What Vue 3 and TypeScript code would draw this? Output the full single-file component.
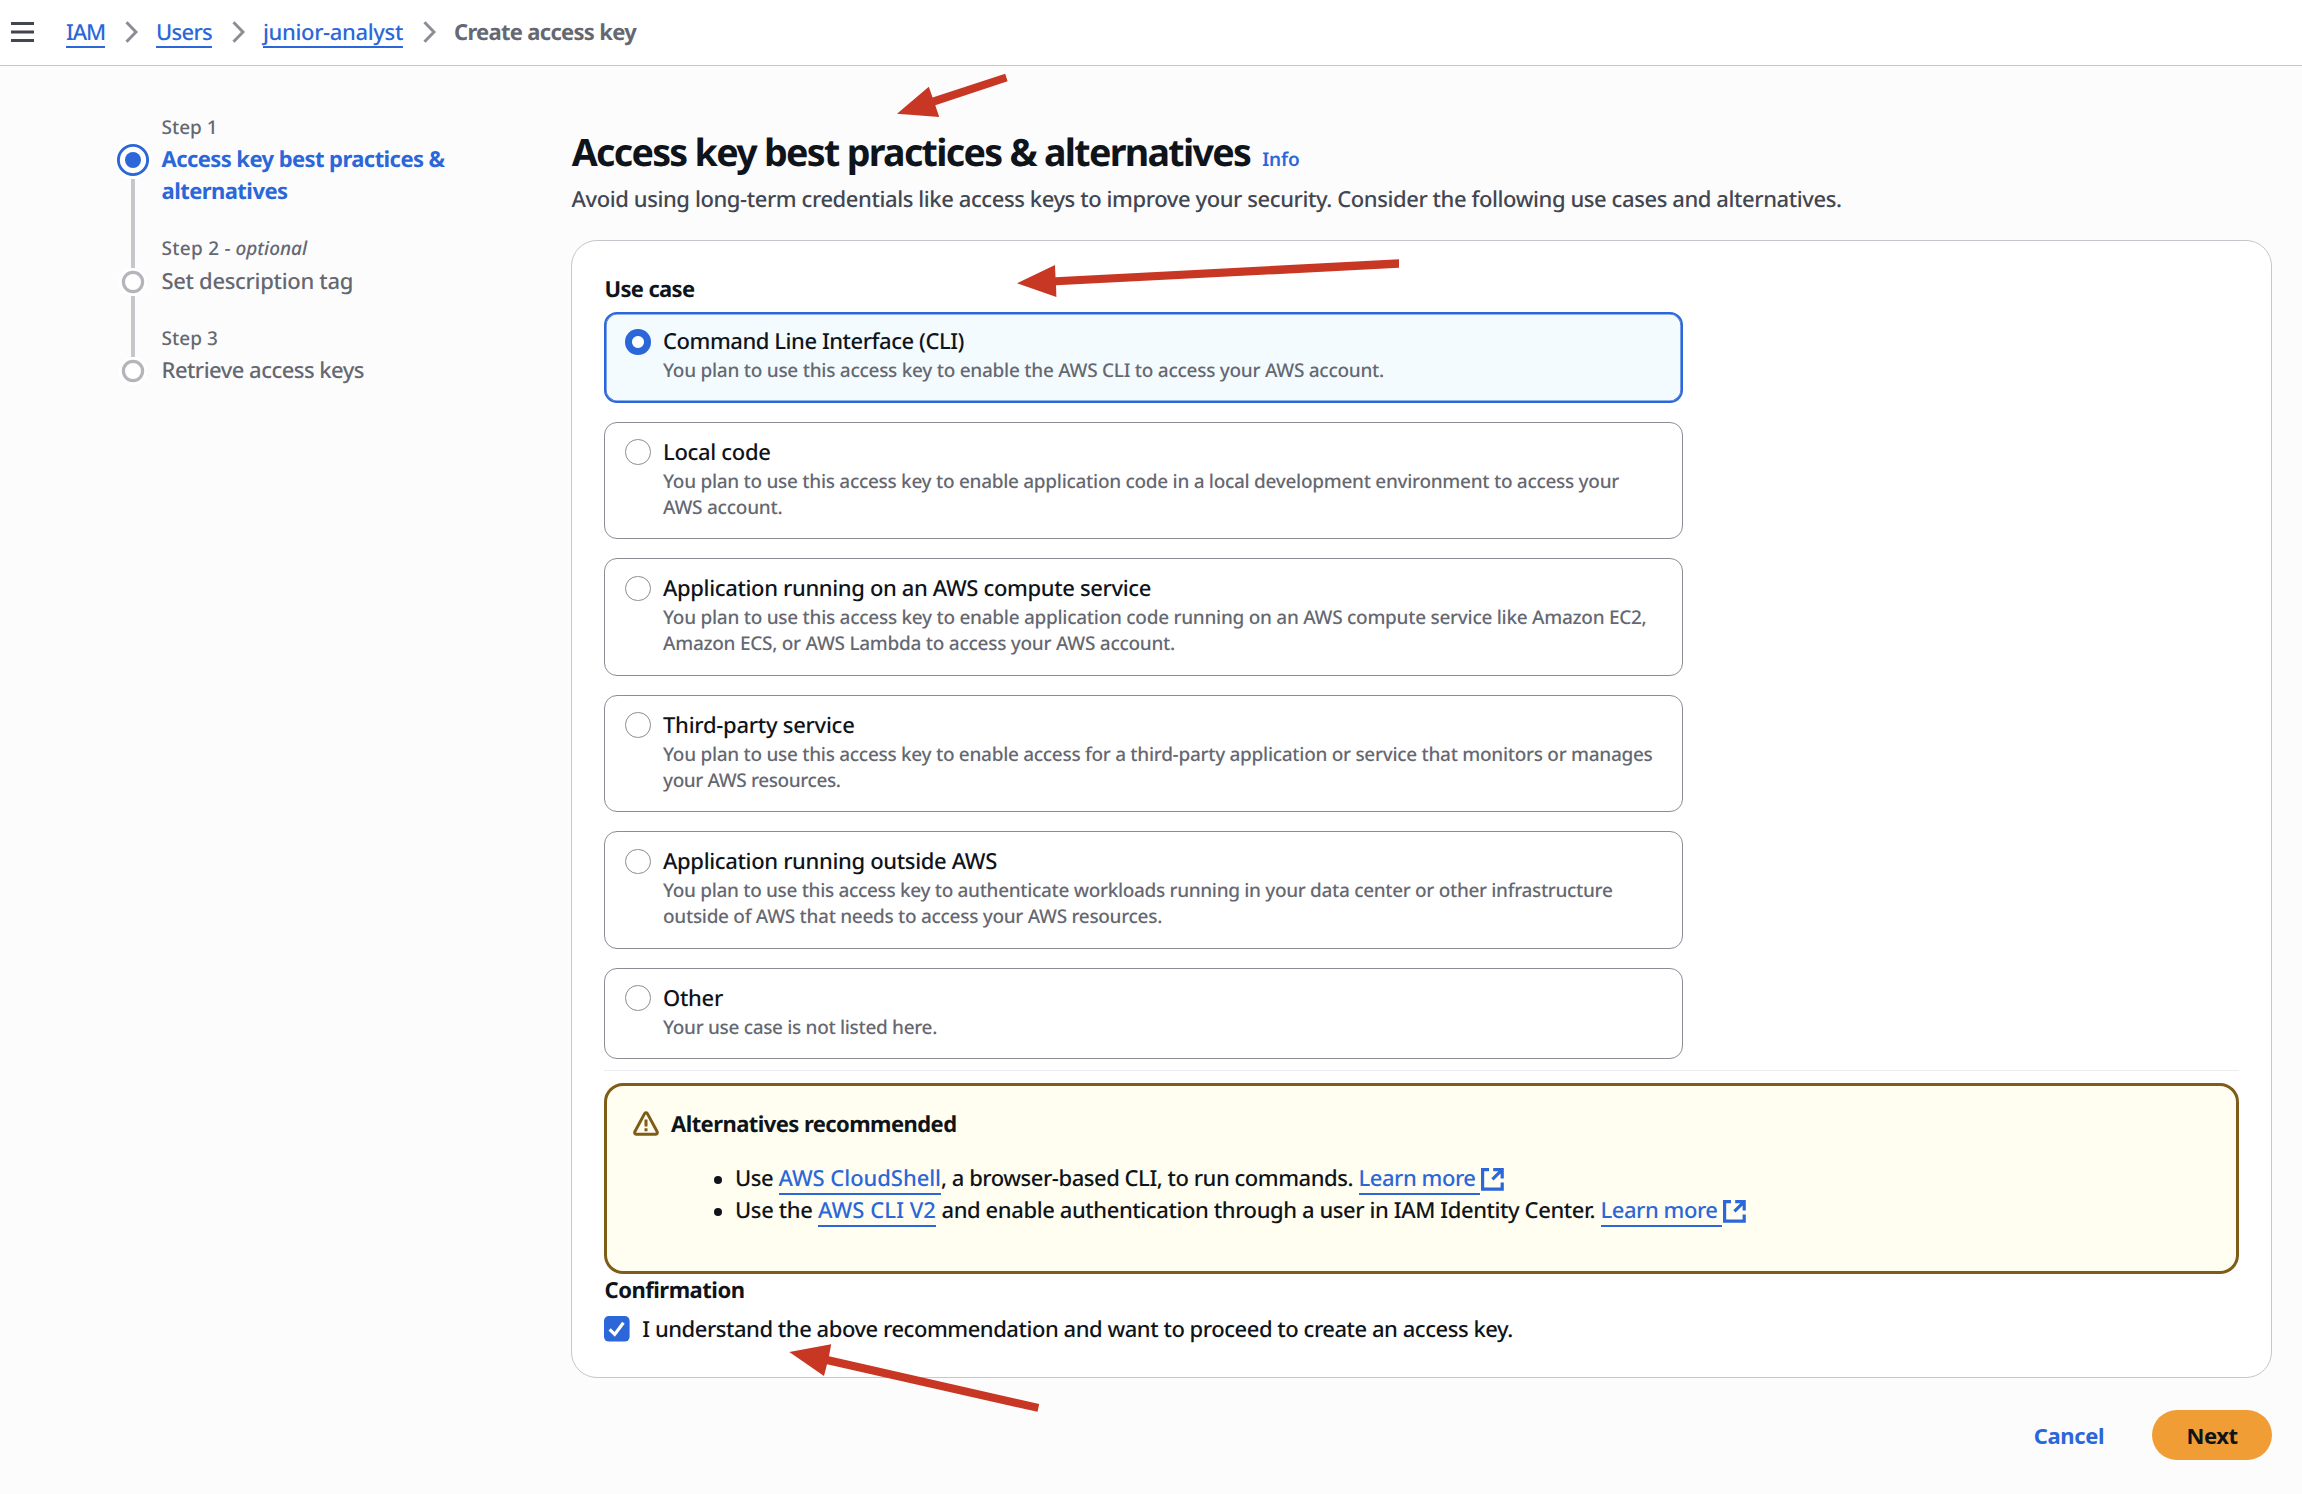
<script setup lang="ts">
import type { Directive } from 'vue'

interface Line { text: string; width: number }
interface UseCase { label: Line; description: Line[] }

// Tracks a piece of text so that its advance equals the given width.
const vTrack: Directive<HTMLElement, number> = {
  mounted(el, { value }) {
    const natural = el.getBoundingClientRect().width
    const count = (el.textContent ?? '').length
    if (count > 0) el.style.letterSpacing = `${((value - natural) / count).toFixed(4)}px`
  },
}

const crumbs: Line[] = [
  { text: 'IAM', width: 39 },
  { text: 'Users', width: 56 },
  { text: 'junior-analyst', width: 140 },
]

const selected = 0
const useCases: UseCase[] = [
  {
    label: { text: 'Command Line Interface (CLI)', width: 301 },
    description: [
      { text: 'You plan to use this access key to enable the AWS CLI to access your AWS account.', width: 721 },
    ],
  },
  {
    label: { text: 'Local code', width: 107.5 },
    description: [
      { text: 'You plan to use this access key to enable application code in a local development environment to access your', width: 956 },
      { text: 'AWS account.', width: 119.5 },
    ],
  },
  {
    label: { text: 'Application running on an AWS compute service', width: 488 },
    description: [
      { text: 'You plan to use this access key to enable application code running on an AWS compute service like Amazon EC2,', width: 983.5 },
      { text: 'Amazon ECS, or AWS Lambda to access your AWS account.', width: 512 },
    ],
  },
  {
    label: { text: 'Third-party service', width: 191.5 },
    description: [
      { text: 'You plan to use this access key to enable access for a third-party application or service that monitors or manages', width: 989.5 },
      { text: 'your AWS resources.', width: 177.5 },
    ],
  },
  {
    label: { text: 'Application running outside AWS', width: 334 },
    description: [
      { text: 'You plan to use this access key to authenticate workloads running in your data center or other infrastructure', width: 949.5 },
      { text: 'outside of AWS that needs to access your AWS resources.', width: 499 },
    ],
  },
  {
    label: { text: 'Other', width: 60 },
    description: [{ text: 'Your use case is not listed here.', width: 274 }],
  },
]
</script>

<template>
  <div class="page">
    <header class="topbar">
      <svg class="menu" width="23" height="20" viewBox="0 0 23 20">
        <path d="M0 1.6h23M0 10h23M0 18.4h23" stroke="#424650" stroke-width="3" />
      </svg>
      <template v-for="crumb in crumbs" :key="crumb.text">
        <a class="link"><span v-track="crumb.width">{{ crumb.text }}</span></a>
        <svg class="chevron" width="13" height="22" viewBox="0 0 13 22">
          <path d="M1.5 1.2L11 11L1.5 20.8" fill="none" stroke="#8c8c94" stroke-width="3" />
        </svg>
      </template>
      <strong class="current"><span v-track="182">Create access key</span></strong>
    </header>

    <div class="body">
      <nav class="steps">
        <svg class="rail" width="40" height="260" viewBox="0 0 40 260">
          <path d="M20 39V128M20 156V217" stroke="#c6c6cd" stroke-width="4" />
          <circle cx="20" cy="20" r="19" fill="#fff" />
          <circle cx="20" cy="20" r="14.6" fill="#fff" stroke="#2b67d9" stroke-width="2.9" />
          <circle cx="20" cy="20" r="8" fill="#2b67d9" />
          <circle cx="20" cy="142" r="14" fill="#fff" />
          <circle cx="20" cy="142" r="9.6" fill="#fff" stroke="#b4b4bb" stroke-width="3.2" />
          <circle cx="20" cy="231" r="14" fill="#fff" />
          <circle cx="20" cy="231" r="9.6" fill="#fff" stroke="#b4b4bb" stroke-width="3.2" />
        </svg>
        <ol class="step-list">
          <li>
            <div class="step-no"><span v-track="56">Step 1</span></div>
            <div class="step-title active">
              <div><span v-track="283">Access key best practices &amp;</span></div>
              <div><span v-track="126">alternatives</span></div>
            </div>
          </li>
          <li>
            <div class="step-no"><span v-track="69.5">Step 2 -</span><em><span v-track="71.5">optional</span></em></div>
            <div class="step-title"><span v-track="191.5">Set description tag</span></div>
          </li>
          <li>
            <div class="step-no"><span v-track="56.5">Step 3</span></div>
            <div class="step-title"><span v-track="202.5">Retrieve access keys</span></div>
          </li>
        </ol>
      </nav>

      <main class="content">
        <div class="heading">
          <h1><span v-track="678.5">Access key best practices &amp; alternatives</span></h1>
          <a class="info"><span v-track="37.5">Info</span></a>
        </div>
        <p class="subtitle"><span v-track="1270">Avoid using long-term credentials like access keys to improve your security. Consider the following use cases and alternatives.</span></p>

        <section class="card">
          <div class="field-label"><span v-track="90">Use case</span></div>
          <div class="tiles">
            <label v-for="(item, i) in useCases" :key="item.label.text" class="tile" :class="{ selected: i === selected, short: item.description.length === 1 }">
              <span class="radio"></span>
              <span class="tile-text">
                <span class="tile-label"><span v-track="item.label.width">{{ item.label.text }}</span></span>
                <span v-for="line in item.description" :key="line.text" class="tile-desc"><span v-track="line.width">{{ line.text }}</span></span>
              </span>
            </label>
          </div>
          <div class="divider"></div>

          <div class="alert">
            <div class="alert-title">
              <svg width="26" height="25" viewBox="0 0 26 25">
                <path d="M11.6 2.6Q13 .8 14.4 2.6L24.2 20.8Q24.8 23 22.8 23.2H3.2Q1.2 23 1.8 20.8Z" fill="none" stroke="#7f5c18" stroke-width="3" stroke-linejoin="round" />
                <path d="M13 8.5v7M13 17.3v2.9" stroke="#7f5c18" stroke-width="3" />
              </svg>
              <strong><span v-track="285.5">Alternatives recommended</span></strong>
            </div>
            <ul>
              <li>
                <span v-track="38">Use</span>
                <a class="link gap"><span v-track="162.5">AWS CloudShell</span></a>
                <span v-track="412">, a browser-based CLI, to run commands.</span>
                <a class="link learn"><span v-track="117">Learn more</span></a>
                <svg class="external" width="23" height="23" viewBox="0 0 23 23"><path d="M8 1.6H1.6V21.2H21.2V14.5M12.2 1.6H21.2V10.6M21 1.8L11.4 11.4" fill="none" stroke="#2b67d9" stroke-width="3.2" /></svg>
              </li>
              <li>
                <span v-track="77.5">Use the</span>
                <a class="link gap"><span v-track="118">AWS CLI V2</span></a>
                <span class="gap" v-track="653.5">and enable authentication through a user in IAM Identity Center.</span>
                <a class="link learn"><span v-track="117">Learn more</span></a>
                <svg class="external" width="23" height="23" viewBox="0 0 23 23"><path d="M8 1.6H1.6V21.2H21.2V14.5M12.2 1.6H21.2V10.6M21 1.8L11.4 11.4" fill="none" stroke="#2b67d9" stroke-width="3.2" /></svg>
              </li>
            </ul>
          </div>

          <div class="field-label confirm"><span v-track="140">Confirmation</span></div>
          <label class="check">
            <svg width="26" height="26" viewBox="0 0 26 26">
              <rect width="25.6" height="25.6" rx="4.8" fill="#2b67d9" />
              <path d="M5.6 13.4L10.7 18.4L19.4 6.8" fill="none" stroke="#fff" stroke-width="3.2" />
            </svg>
            <span v-track="870.5">I understand the above recommendation and want to proceed to create an access key.</span>
          </label>
        </section>

        <div class="actions">
          <button class="cancel"><span v-track="70.5">Cancel</span></button>
          <button class="next"><span v-track="51">Next</span></button>
        </div>
      </main>
    </div>

    <svg class="arrows" width="2302" height="1494" viewBox="0 0 2302 1494" fill="#c83624">
      <path d="M897 113.7L928.8 86.7L932.6 97.6L1005.2 73.7L1007.6 81.3L935.3 105.2L939.2 117Z" />
      <path d="M1017 283.3L1055 265L1055.5 277.2L1399 259.3V267.8L1056 285.3L1056.4 297Z" />
      <path d="M789.3 1351.9L831.2 1344.2L829 1356.2L1039.2 1404L1037.5 1411.8L827 1364.2L824 1376Z" />
    </svg>
  </div>
</template>

<style>
body {
  margin: 0;
  background: #fcfcfd;
}
</style>

<style scoped>
.page {
  position: relative;
  box-sizing: border-box;
  width: 2302px;
  height: 1494px;
  overflow: hidden;
  background: #fcfcfd;
  color: #0f141a;
  font-family: "Noto Sans", "Open Sans", sans-serif;
  font-size: 22px;
  font-weight: 480;
  line-height: 32px;
  text-rendering: geometricPrecision;
}
span { white-space: nowrap; }
.topbar {
  display: flex;
  align-items: flex-start;
  box-sizing: border-box;
  height: 66px;
  padding: 15.5px 0 0 11px;
  background: #fff;
  border-bottom: 1px solid #c6c6cd;
}
.menu { margin: 6.5px 32px 0 0; }
.link {
  box-sizing: border-box;
  height: 32.5px;
  color: #2b67d9;
  border-bottom: 2px solid #2b67d9;
}
.chevron { margin: 5.5px 18.5px 0 19.5px; }
.current {
  color: #656871;
  font-weight: 700;
}
.body { display: flex; }
.steps {
  box-sizing: border-box;
  display: flex;
  width: 571px;
  padding-left: 113px;
  color: #656871;
}
.rail { margin-top: 74px; }
.step-list {
  display: flex;
  flex-direction: column;
  gap: 29px;
  margin: 48px 0 0;
  padding: 0 0 0 8.5px;
  list-style: none;
}
.step-no {
  display: flex;
  gap: 4.5px;
  height: 28.4px;
  font-size: 19px;
  line-height: 26px;
}
.step-title {
  padding-top: 1px;
  margin-bottom: -1px;
}
.active {
  color: #2b67d9;
  font-weight: 700;
}
.content {
  width: 1701px;
  padding-top: 63px;
}
.heading {
  display: flex;
  align-items: baseline;
  height: 48px;
}
h1 {
  margin: 0 0 0 0.7px;
  font-size: 37.6px;
  font-weight: 700;
  line-height: 48px;
}
.info {
  margin-left: 12px;
  color: #2b67d9;
  font-size: 19px;
  font-weight: 650;
}
.subtitle {
  height: 32px;
  margin: 6.4px 0 24.6px 0.5px;
  color: #424650;
}
.card {
  box-sizing: border-box;
  height: 1138px;
  padding: 31.8px 32px 0;
  background: #fff;
  border: 1px solid #c6c6cd;
  border-radius: 26px;
}
.field-label {
  padding-left: 0.5px;
  font-weight: 700;
}
.tiles {
  display: flex;
  flex-direction: column;
  gap: 19.2px;
  width: 1079px;
  margin-top: 7.2px;
}
.tile {
  display: flex;
  box-sizing: border-box;
  height: 117.3px;
  padding: 13px 0 0 20px;
  border: 1px solid #8c8c94;
  border-radius: 13px;
}
.tile.short { height: 90.8px; }
.tile.selected {
  padding: 11.4px 0 0 19px;
  background: #f3fbfe;
  border: 2px solid #2b67d9;
  box-shadow: inset 0 0 0 0.6px #2b67d9;
}
.radio {
  flex: none;
  box-sizing: border-box;
  width: 25.5px;
  height: 25.5px;
  margin: 3.2px 12.5px 0 0;
  background: #fff;
  border: 1.6px solid #8c8c94;
  border-radius: 50%;
}
.selected .radio {
  margin: 3.8px 12.5px 0 0;
  border: 7.5px solid #2b67d9;
}
.tile-label,
.tile-desc { display: block; }
.tile-desc {
  color: #656871;
  font-size: 19px;
  line-height: 26px;
}
.divider {
  height: 1px;
  margin-top: 11px;
  background: #ebebf0;
}
.alert {
  box-sizing: border-box;
  height: 190.8px;
  margin-top: 12.2px;
  padding: 22.3px 26px 0;
  background: #fffef0;
  border: 3px solid #7f5c18;
  border-radius: 19px;
}
.alert-title {
  display: flex;
  gap: 12px;
}
.alert-title strong { font-weight: 700; }
.alert-title svg { margin-top: 3px; }
ul {
  margin: 22px 0 0;
  padding: 0;
  list-style: none;
}
ul li {
  display: flex;
  height: 32px;
}
ul li::before {
  content: "";
  width: 8px;
  height: 8px;
  margin: 13.5px 13.5px 0 80.5px;
  background: #0f141a;
  border-radius: 50%;
}
.gap { margin-left: 5.5px; }
.learn {
  margin-left: 5.5px;
  padding-right: 4.5px;
}
.external { margin: 5.5px 0 0 1px; }
.confirm {
  height: 32px;
  padding-top: 0.8px;
}
.check {
  display: flex;
  gap: 12.3px;
  margin-top: 6.7px;
}
.check svg { margin-top: 3px; }
.actions {
  display: flex;
  justify-content: flex-end;
  gap: 16px;
  margin-top: 32px;
}
button {
  height: 50px;
  padding: 0;
  background: none;
  border: 0;
  border-radius: 25px;
  color: #2b67d9;
  font: inherit;
  font-weight: 700;
}
.cancel { width: 134px; }
.next {
  width: 120px;
  background: #f09d36;
  color: #0f141a;
}
.arrows {
  position: absolute;
  inset: 0;
  pointer-events: none;
}
</style>
